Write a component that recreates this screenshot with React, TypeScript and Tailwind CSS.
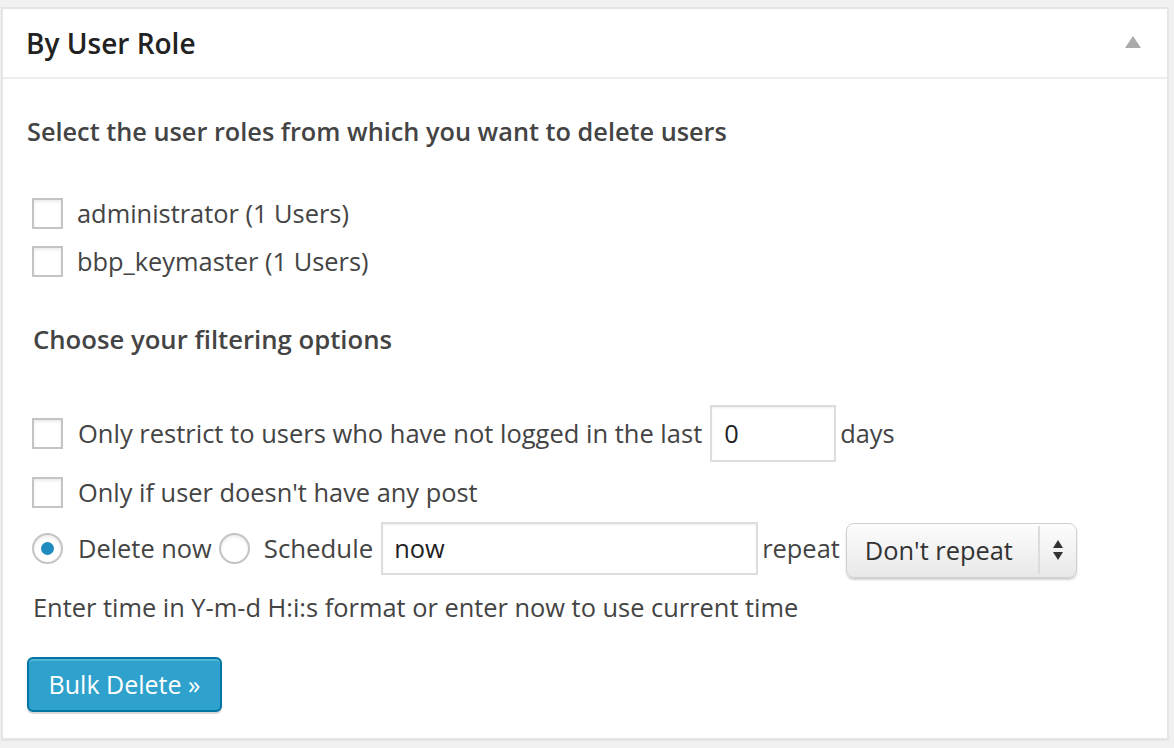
import React from "react";

const Checkbox = () => (
  <span className="inline-block w-[31px] h-[31px] shrink-0 border-2 border-[#c4c4c4] bg-white shadow-[inset_0_2px_3px_rgba(0,0,0,0.08)]" />
);

const Radio = ({ checked, className = "" }: { checked?: boolean; className?: string }) => (
  <span className={"flex items-center justify-center w-[31px] h-[31px] shrink-0 rounded-full border-2 border-[#c4c4c4] bg-white shadow-[inset_0_2px_3px_rgba(0,0,0,0.08)] " + className}>
    {checked && <span className="block w-[13px] h-[13px] rounded-full bg-[#1e8cbe]" />}
  </span>
);

export default function App() {
  return (
    <div
      className="min-h-[748px] w-[1174px] bg-[#f1f1f1] pt-[7px] pl-[1px] text-[#444]"
      style={{ fontFamily: "'Open Sans', 'Noto Sans', sans-serif" }}
    >
      <div className="w-[1168px] h-[734px] bg-white border-2 border-[#e5e5e5] border-b-[3px] flex flex-col">
        {/* Header */}
        <div className="h-[70px] shrink-0 flex items-center justify-between pl-[23px] pr-[26px] border-b-2 border-[#eeeeee]">
          <h3 className="text-[28px] font-semibold text-[#222] leading-none">By User Role</h3>
          <svg width="16" height="12" viewBox="0 0 16 12" className="mb-[2px]">
            <polygon points="8,0 16,12 0,12" fill="#aaaaaa" />
          </svg>
        </div>

        {/* Body */}
        <div className="flex flex-col pl-[24px] text-[25.4px]">
          <div className="mt-[35px] h-[36px] flex items-center font-semibold text-[#444] text-[25.3px]">
            Select the user roles from which you want to delete users
          </div>

          <div className="mt-[39px] h-[48px] flex items-center pl-[5px] gap-[14px]">
            <Checkbox />
            <span>administrator (1 Users)</span>
          </div>
          <div className="h-[48px] flex items-center pl-[5px] gap-[14px]">
            <Checkbox />
            <span>bbp_keymaster (1 Users)</span>
          </div>

          <div className="mt-[37px] h-[36px] flex items-center pl-[6px] font-semibold text-[25.7px]">
            Choose your filtering options
          </div>

          <div className="mt-[45px] h-[60px] flex items-center pl-[5px]">
            <Checkbox />
            <span className="ml-[15px] text-[25.5px]">Only restrict to users who have not logged in the last</span>
            <span className="ml-[8px] w-[126px] h-[57px] border-2 border-[#dddddd] shadow-[inset_0_1px_2px_rgba(0,0,0,0.07)] flex items-center pl-[12px] text-[#222]">
              0
            </span>
            <span className="ml-[4px]">days</span>
          </div>

          <div className="mt-[5px] h-[48px] flex items-center pl-[5px] gap-[15px]">
            <Checkbox />
            <span>Only if user doesn't have any post</span>
          </div>

          <div className="mt-[3px] h-[58px] flex items-center pl-[5px]">
            <Radio checked />
            <span className="ml-[15px]">Delete now</span>
            <Radio className="ml-[7px]" />
            <span className="ml-[14px] text-[25.8px]">Schedule</span>
            <span className="ml-[8px] w-[377px] h-[53px] border-2 border-[#dddddd] shadow-[inset_0_1px_2px_rgba(0,0,0,0.07)] flex items-center pl-[11px] text-[#222]">
              now
            </span>
            <span className="ml-[4px]">repeat</span>
            <span className="ml-[6px] mt-[4px] w-[231px] h-[55px] rounded-[8px] border border-[#d0d0d0] bg-gradient-to-b from-[#fdfdfd] to-[#e8e8e8] shadow-[0_2px_2px_rgba(0,0,0,0.18)] flex items-center text-[#333]">
              <span className="pl-[18px] flex-1">Don't repeat</span>
              <span className="h-[48px] w-[2px] bg-[#dcdcdc]" />
              <span className="w-[36px] flex items-center justify-center">
                <svg width="12" height="22" viewBox="0 0 12 22">
                  <polygon points="6,1 11,9 1,9" fill="#333" />
                  <polygon points="6,21 11,13 1,13" fill="#333" />
                </svg>
              </span>
            </span>
          </div>

          <div className="mt-[12px] h-[36px] flex items-center pl-[6px]">
            Enter time in Y-m-d H:i:s format or enter now to use current time
          </div>

          <div className="mt-[32px]">
            <button className="w-[195px] h-[55px] rounded-[6px] border-2 border-[#0074a2] bg-[#2ea2cc] text-white text-[25px] shadow-[inset_0_2px_0_rgba(120,200,230,0.5),0_2px_0_rgba(0,0,0,0.15)] flex items-center justify-center">
              Bulk Delete »
            </button>
          </div>
        </div>
      </div>
    </div>
  );
}
